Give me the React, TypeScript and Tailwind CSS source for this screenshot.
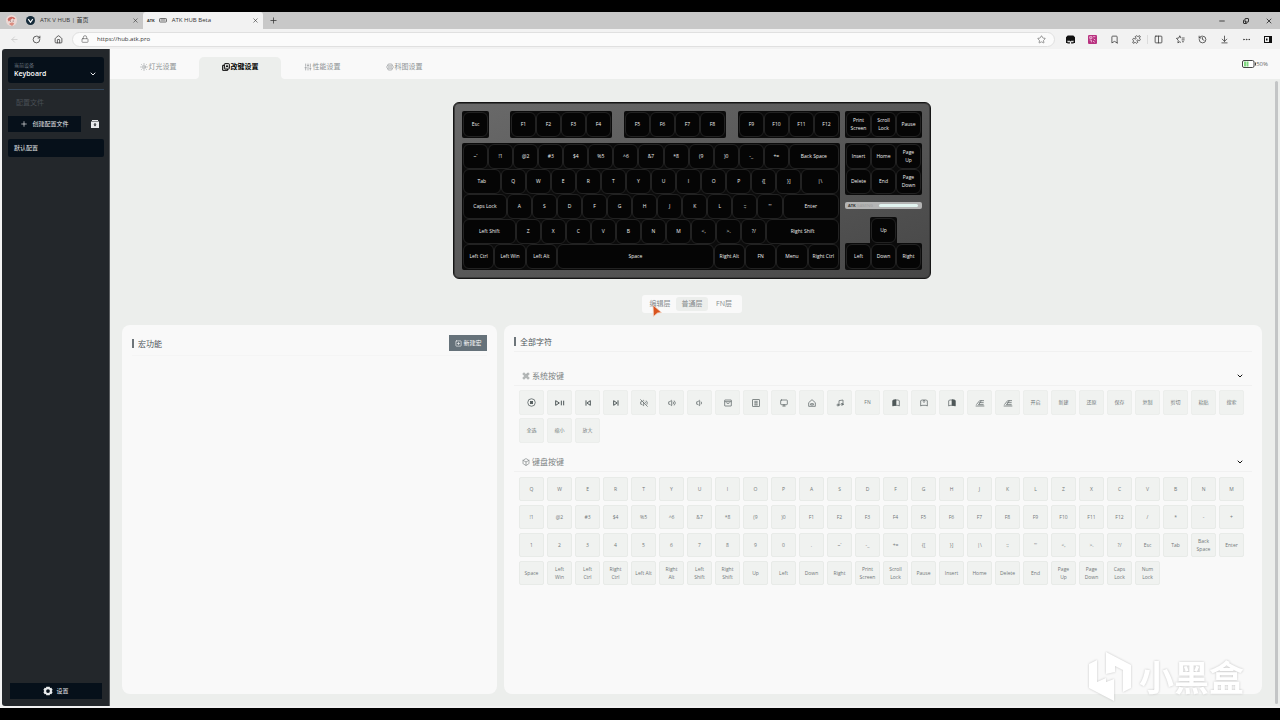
import React, { useState } from 'react';
import {
  ArrowDownToLine,
  ArrowLeft,
  Bookmark,
  Box,
  ChevronDown,
  Columns2,
  Command,
  Copy,
  Ellipsis,
  History,
  House,
  Lock,
  Minus,
  Monitor,
  Music,
  Plus,
  Puzzle,
  RotateCw,
  SlidersVertical,
  SquarePlus,
  Star,
  Sun,
  Volume1,
  Volume2,
  VolumeOff,
  X,
} from 'lucide-react';

interface KeyDef {
  label: string;
  units?: number;
}

const k = (label: string, units = 1): KeyDef => ({ label, units });

const functionGroups: string[][] = [
  ['F1', 'F2', 'F3', 'F4'],
  ['F5', 'F6', 'F7', 'F8'],
  ['F9', 'F10', 'F11', 'F12'],
];

const mainRows: KeyDef[][] = [
  [...['~`', '!1', '@2', '#3', '$4', '%5', '^6', '&7', '*8', '(9', ')0', '-_', '+='].map((l) => k(l)), k('Back Space', 2)],
  [k('Tab', 1.5), ...['Q', 'W', 'E', 'R', 'T', 'Y', 'U', 'I', 'O', 'P', '{[', '}]'].map((l) => k(l)), k('|\\', 1.5)],
  [k('Caps Lock', 1.75), ...['A', 'S', 'D', 'F', 'G', 'H', 'J', 'K', 'L', ':;', '"\''].map((l) => k(l)), k('Enter', 2.25)],
  [k('Left Shift', 2.1), ...['Z', 'X', 'C', 'V', 'B', 'N', 'M', '<,', '>.', '?/'].map((l) => k(l)), k('Right Shift', 2.9)],
  [
    k('Left Ctrl', 1.25),
    k('Left Win', 1.25),
    k('Left Alt', 1.25),
    k('Space', 6.25),
    k('Right Alt', 1.25),
    k('FN', 1.25),
    k('Menu', 1.25),
    k('Right Ctrl', 1.25),
  ],
];

const StopIcon = () => (
  <svg viewBox="0 0 24 24" className="size-[9px]" fill="none" stroke="currentColor" strokeWidth="2">
    <circle cx="12" cy="12" r="10" />
    <rect x="9" y="9" width="6" height="6" fill="currentColor" />
  </svg>
);

const PlayPause = () => (
  <svg viewBox="0 0 30 24" className="h-2 w-[10px]" fill="none" stroke="currentColor" strokeWidth="3">
    <path d="M2 5v14l11-7z" />
    <path d="M19 5v14M26 5v14" />
  </svg>
);

const SkipIcon = ({ flip = false }: { flip?: boolean }) => (
  <svg viewBox="0 0 24 24" className={`size-2 ${flip ? '-scale-x-100' : ''}`} fill="none" stroke="currentColor" strokeWidth="3">
    <path d="M6 4v16M19 5v14l-10-7z" />
  </svg>
);

const MailIcon = () => (
  <svg viewBox="0 0 24 24" className="size-2" fill="none" stroke="currentColor" strokeWidth="2">
    <rect x="2" y="3" width="20" height="18" rx="1" />
    <path d="M2 8h20M7 11l5 3 5-3" />
  </svg>
);

const CalculatorIcon = () => (
  <svg viewBox="0 0 24 24" className="size-2" fill="none" stroke="currentColor" strokeWidth="2">
    <rect x="2" y="2" width="20" height="20" />
    <path d="M7 7h10M7 11h10M7 15h10M7 18h10" />
  </svg>
);

const HomeIcon = () => (
  <svg viewBox="0 0 24 24" className="size-2" fill="none" stroke="currentColor" strokeWidth="2">
    <path d="M2 11L12 2l10 9v11H2zM8 18v-4h8v4z" />
  </svg>
);

const BookPage = ({ side }: { side: 'left' | 'center' | 'right' }) => (
  <svg viewBox="0 0 24 24" className="size-2" fill="none" stroke="currentColor" strokeWidth="2">
    <path d="M2 21V5l4-2h12l4 2v16l-4-2H6z" />
    {side === 'left' && <path d="M3 4l9-2v17l-9 1z" fill="currentColor" />}
    {side === 'center' && <path d="M12 4v8M9 7l3-3 3 3" />}
    {side === 'right' && <path d="M21 4l-9-2v17l9 1z" fill="currentColor" />}
  </svg>
);

const Brightness = () => (
  <svg viewBox="0 0 28 24" className="h-2 w-[10px]" fill="none" stroke="currentColor" strokeWidth="2">
    <path d="M1 21h26M3 17L13 5h13M9 17h16M12 11h13M18 5l-8 12" />
  </svg>
);

const Hexagon = () => (
  <svg viewBox="0 0 24 24" className="size-2" fill="none" stroke="currentColor" strokeWidth="2">
    <path d="M7 3h10l5 9-5 9H7l-5-9z" />
    <circle cx="12" cy="12" r="4" />
    <path d="M7 7l2 2M17 7l-2 2M7 17l2-2M17 17l-2-2" />
  </svg>
);

const Gear = () => (
  <svg viewBox="0 0 24 24" className="size-[10px]" fill="currentColor" fillRule="evenodd">
    <path d="M8 2h8l1 3 3-1 3 5-2 3 2 3-3 5-3-1-1 3H8l-1-3-3 1-3-5 2-3-2-3 3-5 3 1zM12 7.500a4.500 4.500 0 1 0 0 9 4.500 4.500 0 0 0 0-9z" />
  </svg>
);

const KeySwap = () => (
  <svg viewBox="0 0 24 24" className="size-2" fill="none" stroke="currentColor" strokeWidth="3">
    <rect x="7" y="2" width="15" height="16" rx="2" />
    <path d="M7 7H2v15h15v-4M12 13l3-6 3 6" />
  </svg>
);

const systemKeys: { name: string; icon?: React.ReactNode }[] = [
  { name: '停止', icon: <StopIcon /> },
  { name: '播放', icon: <PlayPause /> },
  { name: '上一曲', icon: <SkipIcon /> },
  { name: '下一曲', icon: <SkipIcon flip /> },
  { name: '静音', icon: <VolumeOff className="size-2" /> },
  { name: '音量加', icon: <Volume2 className="size-2" /> },
  { name: '音量减', icon: <Volume1 className="size-2" /> },
  { name: '邮件', icon: <MailIcon /> },
  { name: '计算器', icon: <CalculatorIcon /> },
  { name: '我的电脑', icon: <Monitor className="size-2" /> },
  { name: '主页', icon: <HomeIcon /> },
  { name: '音乐', icon: <Music className="size-2" /> },
  { name: 'FN' },
  { name: '后退', icon: <BookPage side="left" /> },
  { name: '收藏', icon: <BookPage side="center" /> },
  { name: '前进', icon: <BookPage side="right" /> },
  { name: '亮度加', icon: <Brightness /> },
  { name: '亮度减', icon: <Brightness /> },
  ...['开启', '新建', '还原', '保存', '复制', '剪切', '粘贴', '搜索', '全选', '缩小', '放大'].map((name) => ({ name })),
];

const keyboardKeys = [
  ...'QWERTYUIOPASDFGHJKLZXCVBNM'.split(''),
  '!1', '@2', '#3', '$4', '%5', '^6', '&7', '*8', '(9', ')0',
  'F1', 'F2', 'F3', 'F4', 'F5', 'F6', 'F7', 'F8', 'F9', 'F10', 'F11', 'F12',
  '/', '*', '-', '+',
  '1', '2', '3', '4', '5', '6', '7', '8', '9', '0', '.', '~`', '-_', '+=',
  '{[', '}]', '|\\', ':;', '"\'', '<,', '>.', '?/', 'Esc', 'Tab', 'Back Space', 'Enter',
  'Space', 'Left Win', 'Left Ctrl', 'Right Ctrl', 'Left\u00a0Alt', 'Right Alt', 'Left Shift', 'Right Shift',
  'Up', 'Left', 'Down', 'Right', 'Print Screen', 'Scroll Lock', 'Pause', 'Insert', 'Home', 'Delete', 'End',
  'Page Up', 'Page Down', 'Caps Lock', 'Num Lock',
];

const Keycap = ({ label, units = 1 }: KeyDef) => (
  <button
    className={`flex h-[25px] min-w-0 items-center justify-center rounded-[6px] border border-[#222] bg-[#050505] pb-px text-center text-[5px] leading-2 font-medium text-[#f0f0f0] ${
      units === 1 ? 'px-[3px]' : ''
    }`}
    style={{ flex: `${units} 1 ${units * 25}px` }}
  >
    {label}
  </button>
);

const KeyBlock = ({ rows, className = '' }: { rows: KeyDef[][]; className?: string }) => (
  <div className={`rounded-[2px] bg-[#0b0b0b] p-px ${className}`}>
    {rows.map((row, i) => (
      <div key={i} className="flex">
        {row.map((key) => (
          <Keycap key={key.label} {...key} />
        ))}
      </div>
    ))}
  </div>
);

const Keyboard = () => (
  <div className="flex gap-[5px] rounded-md border border-[#161616] bg-linear-to-br from-[#6a6a6a] to-[#474747] p-2 shadow-[inset_0_0_0_1px_#3c3c3c]">
    <div className="flex w-[378px] flex-col gap-[5px]">
      <div className="flex justify-between">
        <KeyBlock rows={[[k('Esc')]]} className="w-[27px]" />
        <div className="flex gap-3">
          {functionGroups.map((group) => (
            <KeyBlock key={group[0]} rows={[group.map((l) => k(l))]} className="w-[102px]" />
          ))}
        </div>
      </div>
      <KeyBlock rows={mainRows} className="w-full" />
    </div>
    <div className="flex w-[77px] flex-col">
      <KeyBlock rows={[[k('Print Screen'), k('Scroll Lock'), k('Pause')]]} className="mb-[5px]" />
      <KeyBlock
        rows={[
          [k('Insert'), k('Home'), k('Page Up')],
          [k('Delete'), k('End'), k('Page Down')],
        ]}
        className="mb-[7px]"
      />
      <div className="flex h-[7px] items-center justify-between rounded-[2px] bg-[#b4b4b4] pr-1 pl-[3px] text-[4px] leading-none font-bold text-[#333]">
        <span>
          ATK <span className="font-normal text-[#999]">GAMING</span>
        </span>
        <span className="h-[3px] w-[39px] rounded-full bg-[#e2f4f0]" />
      </div>
      <div className="mt-auto">
        <div className="mx-auto w-[27px] rounded-t-[2px] bg-[#0b0b0b] px-px pt-px">
          <div className="flex">
            <Keycap label="Up" />
          </div>
        </div>
        <KeyBlock rows={[[k('Left'), k('Down'), k('Right')]]} />
      </div>
    </div>
  </div>
);

const BrowserChrome = () => (
  <header className="text-[#333]">
    <div className="flex h-[17px] items-stretch bg-[#c8c8c8] text-[6px]">
      <div className="flex w-[22px] items-center justify-center">
        <svg viewBox="0 0 20 20" className="size-[11px]">
          <circle cx="10" cy="10" r="10" fill="#ecd8d4" />
          <path d="M3 8c2-6 11-7 14-1l-3 1-2-2-4 3-3 3z" fill="#cf6a62" />
          <path d="M6 17c0-4 7-5 9-1l-4 4z" fill="#d98d80" />
          <circle cx="8" cy="11" r="1" fill="#6b4040" />
          <circle cx="13" cy="11" r="1" fill="#6b4040" />
        </svg>
      </div>
      <div className="flex w-[121px] items-center px-1">
        <svg viewBox="0 0 20 20" className="mr-[5px] size-[9px]">
          <circle cx="10" cy="10" r="10" fill="#152b3a" />
          <path d="M5 7l5 7 5-7" fill="none" stroke="#fff" strokeWidth="2.500" />
        </svg>
        <span className="flex-1">ATK V HUB | 首页</span>
        <button aria-label="关闭标签页">
          <X className="size-[7px]" />
        </button>
      </div>
      <div className="flex w-[120px] items-center rounded-t-[3px] bg-[#f2f2f2] px-1">
        <span className="mr-1 text-[4px] font-bold">ATK</span>
        <svg viewBox="0 0 16 10" className="mr-[5px] h-[5px] w-2" fill="none" stroke="#444" strokeWidth="1.500">
          <rect x="1" y="1" width="14" height="7" rx="1.500" />
          <path d="M3 4h10" />
        </svg>
        <span className="flex-1">ATK HUB Beta</span>
        <button aria-label="关闭标签页">
          <X className="size-[7px]" />
        </button>
      </div>
      <button aria-label="新标签页" className="px-1.5">
        <Plus className="size-[9px]" />
      </button>
      <div className="ml-auto flex text-black">
        <button aria-label="最小化" className="flex w-6 items-center justify-center">
          <Minus className="size-2" />
        </button>
        <button aria-label="还原" className="flex w-6 items-center justify-center">
          <Copy className="size-1.5 -scale-x-100 rotate-180" strokeWidth={3} />
        </button>
        <button aria-label="关闭" className="flex w-[22px] items-center justify-center">
          <X className="size-2" />
        </button>
      </div>
    </div>
    <div className="flex h-5 items-center bg-[#f2f2f2] pr-px pl-[3px]">
      <button aria-label="后退" className="flex w-[22px] justify-center text-[#c8c8c8]">
        <ArrowLeft className="size-[9px]" />
      </button>
      <button aria-label="刷新" className="flex w-[22px] justify-center">
        <RotateCw className="size-[9px]" />
      </button>
      <button aria-label="主页" className="flex w-[22px] justify-center">
        <House className="size-[9px]" />
      </button>
      <div className="mr-1 ml-[3px] flex h-[15px] flex-1 items-center rounded-full border border-[#e0e0e0] bg-[#fbfbfb] px-2">
        <Lock className="size-2 text-[#666]" />
        <input
          aria-label="地址栏"
          defaultValue="https://hub.atk.pro"
          className="ml-2 min-w-0 flex-1 bg-transparent text-[6px] leading-3 text-[#333] outline-none"
        />
        <Star className="size-[9px] text-[#777]" />
      </div>
      <button aria-label="扩展一" className="flex w-[22px] justify-center">
        <svg viewBox="0 0 16 16" className="size-[9px]">
          <path d="M3 1h10l3 3v10h-2l-1 1H9v-4H7v4H3l-1-1H0V4z" fill="#111" />
          <path d="M2 10h5v3H3zM9 10h5l-1 3H9z" fill="#ddd" />
        </svg>
      </button>
      <button aria-label="扩展二" className="flex w-[22px] justify-center">
        <svg viewBox="0 0 16 16" className="size-[9px]">
          <rect width="16" height="16" rx="2" fill="#b83280" />
          <path d="M3 3h4v3H3zM9 3h4M10 7l3 2M3 9h3v4M9 11l3 2" fill="none" stroke="#f5c6e0" strokeWidth="1.500" />
        </svg>
      </button>
      <button aria-label="书签" className="flex w-[22px] justify-center">
        <Bookmark className="size-[9px]" />
      </button>
      <button aria-label="扩展" className="flex w-[22px] justify-center">
        <Puzzle className="size-[9px]" />
      </button>
      <button aria-label="分屏" className="flex w-[22px] justify-center border-l border-[#dcdcdc]">
        <Columns2 className="size-[9px]" />
      </button>
      <button aria-label="收藏夹" className="flex w-[22px] justify-center">
        <svg viewBox="0 0 24 24" className="size-[9px]" fill="none" stroke="currentColor" strokeWidth="2" strokeLinejoin="round">
          <path d="M14 8h-1L10 2 7.500 8 1 9l5 5-1 7 5-3 3 2M16 8h7M15 13h8M16 18h5" />
        </svg>
      </button>
      <button aria-label="历史记录" className="flex w-[22px] justify-center">
        <History className="size-[9px]" />
      </button>
      <button aria-label="下载" className="flex w-[22px] justify-center">
        <ArrowDownToLine className="size-[9px]" />
      </button>
      <button aria-label="更多" className="flex w-[22px] justify-center">
        <Ellipsis className="size-[9px]" />
      </button>
      <button aria-label="侧边栏" className="flex w-[22px] justify-center">
        <svg viewBox="0 0 16 14" className="h-[7px] w-2">
          <rect x="1" y="1" width="14" height="12" fill="none" stroke="#111" strokeWidth="2" />
          <path d="M10 1h5v12h-5zM4 5h3v4H4z" fill="#111" />
        </svg>
      </button>
    </div>
  </header>
);

const Sidebar = () => (
  <aside className="flex w-[108px] shrink-0 flex-col rounded-l-[3px] border-r border-[#5b5e61] bg-[#23272b] pt-2 pr-[5px] pb-[7px] pl-1.5 text-[6px] text-[#e8eaec]">
    <div className="relative h-[26px] rounded-[3px] bg-[#06101a] px-1.5 pt-1">
      <label htmlFor="device" className="block text-[5px] leading-2 text-[#68727c]">
        当前设备
      </label>
      <select
        id="device"
        className="block w-full appearance-none bg-transparent text-[7px] leading-[10px] font-semibold text-white outline-none"
      >
        <option>Keyboard</option>
      </select>
      <ChevronDown className="pointer-events-none absolute top-[13px] right-[7px] size-2" strokeWidth={3} />
    </div>
    <div className="mt-1.5 border-t border-[#33465a]" />
    <h2 className="mt-2 pl-2 text-[7px] leading-[10px] text-[#484e54]">配置文件</h2>
    <div className="mt-2 flex items-center">
      <button className="flex h-4 w-[73px] items-center justify-center gap-1 bg-[#06101a]">
        <Plus className="size-2" />
        创建配置文件
      </button>
      <button aria-label="导入配置" className="mr-[5px] ml-auto">
        <svg viewBox="0 0 16 16" className="size-2" fill="currentColor" fillRule="evenodd">
          <path d="M2 0h12v2H2zM0 3h16v13H0zM7 6v3H5l3 4 3-4H9V6z" />
        </svg>
      </button>
    </div>
    <button className="mt-[7px] h-[18px] rounded-[2px] bg-[#06101a] px-1.5 text-left">默认配置</button>
    <button className="mx-0.5 mt-auto flex h-4 items-center justify-center gap-[3px] bg-[#06101a]">
      <Gear />
      设置
    </button>
  </aside>
);

const tabs = [
  { name: '灯光设置', icon: <Sun className="size-2" /> },
  { name: '改键设置', icon: <KeySwap /> },
  { name: '性能设置', icon: <SlidersVertical className="size-2" /> },
  { name: '科图设置', icon: <Hexagon /> },
];

const layers = ['编辑层', '普通层', 'FN层'];

// inverted corners where the active tab meets the page
const tabCorners =
  'before:absolute before:bottom-0 before:right-full before:size-1 before:rounded-br-[4px] before:bg-[#f9f9f9] before:shadow-[2px_2px_0_1px_#eceeec] before:[clip-path:inset(0)] after:absolute after:bottom-0 after:left-full after:size-1 after:rounded-bl-[4px] after:bg-[#f9f9f9] after:shadow-[-2px_2px_0_1px_#eceeec] after:[clip-path:inset(0)]';

const GroupHeader = ({ icon, title }: { icon: React.ReactNode; title: string }) => (
  <button className="flex h-5 w-full items-center gap-[2px] border-b border-[#f1f1f1] px-2 text-[8px] text-[#7c8283]">
    {icon}
    {title}
    <ChevronDown className="ml-auto size-2 text-[#111]" strokeWidth={3} />
  </button>
);

const App = () => {
  const [activeTab, setActiveTab] = useState('改键设置');
  const [layer, setLayer] = useState('普通层');

  return (
    <div className="flex min-h-screen flex-col bg-black py-3 font-['Open_Sans','Noto_Sans_CJK_SC',sans-serif]">
      <BrowserChrome />
      <div className="relative flex flex-1 border-b-2 border-l-2 border-[#f2f2f2] bg-[#eceeec]">
        <Sidebar />
        <main className="flex min-w-0 flex-1 flex-col">
          <nav className="flex h-[30px] items-end bg-[#f9f9f9] pr-3 pl-[7px]">
            {tabs.map((tab) => (
              <button
                key={tab.name}
                onClick={() => setActiveTab(tab.name)}
                className={`relative flex h-[22px] w-[82px] items-center justify-center gap-px pb-0.5 text-[7px] ${
                  activeTab === tab.name
                    ? `rounded-t-[5px] bg-[#eceeec] font-bold text-black ${tabCorners}`
                    : 'text-[#8e9395]'
                }`}
              >
                {tab.icon}
                {tab.name}
              </button>
            ))}
            <div className="ml-auto flex items-center self-center text-[6px] text-[#666]">
              <svg viewBox="0 0 28 16" className="h-2 w-[14px]">
                <rect x="1" y="1" width="23" height="14" rx="3" fill="#fff" stroke="#444" strokeWidth="2" />
                <path d="M4 3h4v10H4zM9 3h4v10H9z" fill="#7fd67f" />
                <path d="M27 5v6" stroke="#444" strokeWidth="2" />
              </svg>
              50%
            </div>
          </nav>
          <div className="flex flex-1 flex-col items-center pt-[23px] pr-[18px] pb-3 pl-3">
            <Keyboard />
            <div className="relative mt-4 flex rounded-[3px] bg-[#f9f9f9] p-0.5 text-[7px] text-[#868b8d]">
              {layers.map((name) => (
                <button
                  key={name}
                  onClick={() => setLayer(name)}
                  className={`h-[14px] w-8 rounded-[3px] ${layer === name ? 'bg-[#eceeec]' : ''}`}
                >
                  {name}
                </button>
              ))}
              <svg viewBox="0 0 20 28" className="pointer-events-none absolute top-[9px] left-[10px] h-[14px] w-[10px]">
                <path d="M2 2l17 15-8 1-8 7z" fill="#d9541e" stroke="#f3d4c4" strokeWidth="1.500" />
              </svg>
            </div>
            <div className="mt-3 grid w-full flex-1 grid-cols-[331fr_669fr] gap-[7px]">
              <section className="rounded-lg bg-[#f9f9f9] px-[10px] pt-[10px]">
                <div className="flex items-center border-b border-[#f5f5f5] pb-1">
                  <h2 className="border-l-2 border-[#6d757a] pl-1 text-[8px] leading-[9px] text-[#50575b]">宏功能</h2>
                  <button className="ml-auto flex h-4 w-[38px] items-center justify-center gap-[2px] bg-[#66727a] text-[6px] text-white">
                    <SquarePlus className="size-[7px]" />
                    新建宏
                  </button>
                </div>
              </section>
              <section className="rounded-lg bg-[#f9f9f9] px-[10px] pt-3">
                <div className="border-b border-[#f1f1f1] pb-[5px]">
                  <h2 className="border-l-2 border-[#6d757a] pl-1 text-[8px] leading-[9px] text-[#50575b]">全部字符</h2>
                </div>
                <div className="mt-[14px]">
                  <GroupHeader icon={<Command className="size-2" />} title="系统按键" />
                  <div className="mt-1 grid grid-cols-[repeat(auto-fill,25px)] gap-[3px] px-[5px]">
                    {systemKeys.map((key) => (
                      <button
                        key={key.name}
                        aria-label={key.name}
                        className={`flex h-[25px] items-center justify-center rounded-[2px] border border-[#eceeec] bg-[#f0f2f0] text-[5px] ${
                          key.icon ? 'text-[#4f5859]' : 'text-[#70797a]'
                        }`}
                      >
                        {key.icon ?? key.name}
                      </button>
                    ))}
                  </div>
                </div>
                <div className="mt-[9px]">
                  <GroupHeader icon={<Box className="size-2" />} title="键盘按键" />
                  <div className="mt-[5px] grid grid-cols-[repeat(auto-fill,25px)] gap-x-[3px] gap-y-1 px-[5px]">
                    {keyboardKeys.map((label) => (
                      <button
                        key={label}
                        className="flex h-6 items-center justify-center rounded-[2px] border border-[#e8ebe8] bg-[#f0f2f0] px-[3px] text-center text-[5px] leading-2 text-[#707879]"
                      >
                        {label}
                      </button>
                    ))}
                  </div>
                </div>
              </section>
            </div>
          </div>
        </main>
        {/* page scrollbar */}
        <div className="absolute top-8 right-0.5 bottom-0.5 w-[3px] rounded-full bg-[#c3c5c6]" />
        <div className="pointer-events-none absolute right-9 bottom-1 flex items-center gap-2 text-[35px] leading-none font-bold text-white drop-shadow-[0_0_1px_#c4c4c4]">
          <svg viewBox="0 0 42 50" className="h-[50px] w-[42px]" fill="currentColor">
            <path d="M0 12l8-4v22l9-4v4l8-3v22L0 36z" />
            <path d="M17 0l25 13v23l-8 4V18l-8-4v6l-9 2z" />
          </svg>
          小黑盒
        </div>
      </div>
    </div>
  );
};

export default App;
